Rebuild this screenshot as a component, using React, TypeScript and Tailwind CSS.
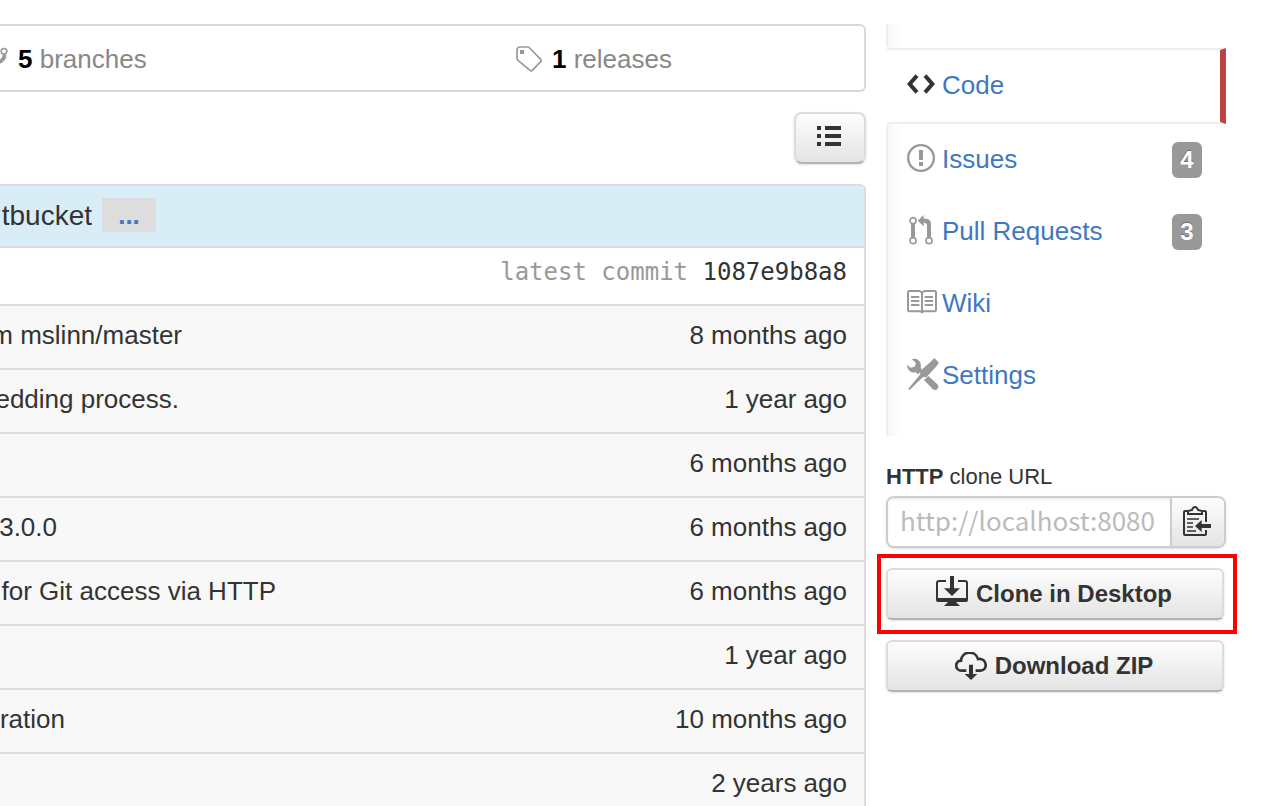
import React from "react";

const GRADIENT = "bg-gradient-to-b from-[#fdfdfd] to-[#e4e4e4]";

function BranchIcon() {
  return (
    <svg aria-hidden="true" className="h-[26px] w-2 shrink-0 overflow-visible" viewBox="0 0 24 78" fill="none" stroke="#999">
      <circle cx="12" cy="16" r="8.5" strokeWidth="5" />
      <path d="M14 27c-1 10-5 17-19 22" strokeWidth="11" />
    </svg>
  );
}

function TagIcon() {
  return (
    <svg aria-hidden="true" className="h-[26px] w-[26px] shrink-0" viewBox="0 0 78 78" fill="none" stroke="#999" strokeWidth="5" strokeLinejoin="round">
      <path d="M3 12Q3 3 12 3h22q4 0 7 3l33 34q4 4 0 7L49 73q-3 4-7 0L6 43q-3-3-3-7z" />
      <rect x="12" y="12" width="12" height="12" fill="#999" stroke="none" />
    </svg>
  );
}

function ListIcon() {
  return (
    <svg aria-hidden="true" className="h-5 w-6" viewBox="0 0 24 20" fill="#333">
      <path d="M0 0h4v4H0zM8 0h16v4H8zM0 8h4v4H0zM8 8h16v4H8zM0 16h4v4H0zM8 16h16v4H8z" />
    </svg>
  );
}

function CodeIcon() {
  return (
    <svg aria-hidden="true" className="h-5 w-7" viewBox="0 0 84 60" fill="none" stroke="#333" strokeWidth="12">
      <path d="M30 5L8 30l22 25M54 5l22 25-22 25" />
    </svg>
  );
}

function IssueIcon() {
  return (
    <svg aria-hidden="true" className="h-7 w-7" viewBox="0 0 84 84" fill="#999">
      <circle cx="42" cy="42" r="38.5" fill="none" stroke="#999" strokeWidth="7" />
      <path d="M36 18h12v30H36zM36 54h12v12H36z" />
    </svg>
  );
}

function PullRequestIcon() {
  return (
    <svg aria-hidden="true" className="ml-0.5 h-[30px] w-6" viewBox="0 0 72 90" fill="#999">
      <g fill="none" stroke="#999" strokeWidth="5">
        <circle cx="12" cy="17" r="9" />
        <circle cx="12" cy="77" r="9" />
        <circle cx="60" cy="77" r="9" />
      </g>
      <path d="M6 27h12v40H6zM26 17L44 0v11h6q16 0 16 17v39H54V31q0-8-10-8v11z" />
    </svg>
  );
}

function WikiIcon() {
  return (
    <svg aria-hidden="true" className="h-6 w-[30px]" viewBox="0 0 90 72" fill="none" stroke="#999" strokeWidth="6">
      <path d="M45 9q-3-6-9-6H7Q3 3 3 7v53q0 4 4 4h32q6 0 6 6q0-6 6-6h32q4 0 4-4V7q0-4-4-4H54q-6 0-9 6v60" />
      <path d="M12 21h25M12 33h25M12 45h25M53 21h25M53 33h25M53 45h25" />
    </svg>
  );
}

function ToolsIcon() {
  return (
    <svg aria-hidden="true" className="h-8 w-8" viewBox="0 0 96 96" fill="#999">
      <path d="M82 0l14 14-9 12-29 32-10-1L8 96l-4-4 36-43-1-9 32-29z" />
      <path d="M15 4C31-2 45 12 41 28l4 8-11 13-9-6C12 46 1 36 0 20l11 9 12-3 4-11z" />
      <path d="M64 54l27 25q6 8 0 14t-14 0L51 66z" />
    </svg>
  );
}

function ClipboardIcon() {
  return (
    <svg aria-hidden="true" className="h-[30px] w-7" viewBox="0 0 84 90" fill="none" stroke="#333" strokeWidth="6">
      <path d="M12 15H6q-3 0-3 3v66q0 3 3 3h60q3 0 3-3V72M60 15h6q3 0 3 3v30" />
      <path d="M15 24v-9l12-3q3-9 9-9t9 9l12 3v9z" />
      <path d="M12 39h36M12 51h18M12 63h18M12 75h27" strokeWidth="5" />
      <path d="M36 60l20-18v12h28v12H56v12z" fill="#333" stroke="none" />
    </svg>
  );
}

function DesktopIcon() {
  return (
    <svg aria-hidden="true" className="mb-1.5 h-[30px] w-8" viewBox="0 0 96 90" fill="#333">
      <path d="M30 15H9q-6 0-6 6v48h90V21q0-6-6-6H66" fill="none" stroke="#333" strokeWidth="6" />
      <path d="M0 66h96v6q0 6-6 6H6q-6 0-6-6zM36 78h24l12 12H24zM42 0h12v37h18L48 60 24 37h18z" />
    </svg>
  );
}

function CloudIcon() {
  return (
    <svg aria-hidden="true" className="h-7 w-8" viewBox="0 0 96 84" fill="#333">
      <path d="M34 56H20C-1 56-2 27 18 26 20-4 62-6 69 21 98 18 99 56 76 56H62" fill="none" stroke="#333" strokeWidth="8" />
      <path d="M42 38h12v28h13L48 84 29 66h13z" />
    </svg>
  );
}

type NavItemProps = { label: string; icon: React.ReactNode; count?: number };

function NavLink({ label, icon, count }: NavItemProps) {
  return (
    <a href="#" className="flex h-[72px] items-center pl-[21px] pr-6 text-[#4078c0]">
      <span className="flex w-[35px] shrink-0 items-center pb-1">{icon}</span>
      <span className="flex-1 pb-0.5">{label}</span>
      {count !== undefined && (
        <span className="flex h-9 w-[30px] items-center justify-center rounded-md bg-[#999] text-2xl font-bold text-white [text-shadow:0_-1px_1px_rgba(0,0,0,0.3)]">
          {count}
        </span>
      )}
    </a>
  );
}

const ROWS = [
  { message: "m mslinn/master", width: "w-[182px]", age: "8 months ago" },
  { message: "edding process.", width: "w-[179px]", age: "1 year ago" },
  { message: "", width: "w-0", age: "6 months ago" },
  { message: "3.0.0", width: "w-[57px]", age: "6 months ago" },
  { message: "for Git access via HTTP", width: "w-[276px]", age: "6 months ago" },
  { message: "", width: "w-0", age: "1 year ago" },
  { message: "ration", width: "w-[65px]", age: "10 months ago" },
  { message: "", width: "w-0", age: "2 years ago" },
];

function ActionButton({ icon, label }: { icon: React.ReactNode; label: string }) {
  return (
    <button
      type="button"
      className={`${GRADIENT} flex h-[52px] w-full items-center justify-center gap-2 rounded-md border-2 border-[#dcdcdc] border-b-[#b3b3b3] pr-0.5 text-2xl font-bold shadow-sm`}
    >
      {icon}
      {label}
    </button>
  );
}

export default function App() {
  return (
    <div className="flex h-screen items-start gap-5 overflow-hidden bg-white pr-[54px] pt-6 font-['Liberation_Sans',Arial,sans-serif] text-[26px] leading-8 text-[#333]">
      <main className="min-w-0 flex-1">
        <div className="flex h-[68px] items-center rounded-r-md border-y-2 border-r-2 border-[#d8d8d8] pt-0.5 text-[#888]">
          <a href="#" className="flex w-[516px] items-center gap-2.5">
            <BranchIcon />
            <span><b className="text-black">5</b> branches</span>
          </a>
          <a href="#" className="flex items-center gap-2.5">
            <TagIcon />
            <span><b className="text-black">1</b> releases</span>
          </a>
        </div>

        <div className="flex justify-end py-5">
          <button
            type="button"
            aria-label="List view"
            className={`${GRADIENT} flex h-[52px] w-[72px] items-center justify-center rounded-lg border-2 border-[#dcdcdc] border-b-[#b3b3b3] pb-1 pr-0.5 shadow-sm`}
          >
            <ListIcon />
          </button>
        </div>

        <div className="overflow-hidden rounded-tr-md border-r-2 border-t-2 border-[#ddd]">
          <table className="w-full border-collapse">
            <thead>
              <tr className="h-[61px] border-b-2 border-[#ddd] bg-[#d9edf7]">
                <th colSpan={2} className="p-0 text-left font-normal">
                  <div className="flex items-center gap-2.5">
                    <span className="flex w-[92px] justify-end overflow-hidden whitespace-nowrap text-[28px]">tbucket</span>
                    <button type="button" className="mb-0.5 h-[34px] w-[54px] bg-[#ddd] font-bold leading-8 text-[#4078c0]">...</button>
                  </div>
                </th>
              </tr>
            </thead>
            <tbody>
              <tr className="h-[58px] border-b-2 border-[#ddd]">
                <td colSpan={2} className="p-0 pb-2 pr-[17px] text-right font-['DejaVu_Sans_Mono',monospace] text-2xl text-[#333]">
                  <span className="text-[#999]">latest commit</span> <a href="#">1087e9b8a8</a>
                </td>
              </tr>
              {ROWS.map((row, i) => (
                <tr key={i} className="h-16 border-b-2 border-[#ddd] bg-[#f8f8f8]">
                  <td className="p-0 pb-1">
                    <div className={`${row.width} flex justify-end overflow-hidden whitespace-nowrap`}>{row.message}</div>
                  </td>
                  <td className="whitespace-nowrap p-0 pb-1 pr-[17px] text-right">{row.age}</td>
                </tr>
              ))}
            </tbody>
          </table>
        </div>
      </main>

      <aside className="w-[340px] shrink-0">
        <nav aria-label="Repository">
          <div className="h-6 rounded-bl border-l-2 border-[#eee] bg-gradient-to-r from-[#f7f7f7] to-white to-[14px]" />
          <div className="rounded-l border-y-2 border-r-[6px] border-y-[#eee] border-r-[#bb4444]">
            <NavLink label="Code" icon={<CodeIcon />} />
          </div>
          <div className="rounded-tl border-l-2 border-[#eee] bg-gradient-to-r from-[#f7f7f7] to-white to-[14px] pb-6">
            <div className="-ml-0.5">
              <NavLink label="Issues" icon={<IssueIcon />} count={4} />
              <NavLink label="Pull Requests" icon={<PullRequestIcon />} count={3} />
              <NavLink label="Wiki" icon={<WikiIcon />} />
              <NavLink label="Settings" icon={<ToolsIcon />} />
            </div>
          </div>
        </nav>

        <label htmlFor="clone-url" className="block pb-[3px] pt-[25px] text-[22px]">
          <b>HTTP</b> clone URL
        </label>
        <div className="flex h-[52px] overflow-hidden rounded-lg border-2 border-[#ccc] shadow-sm">
          <input
            id="clone-url"
            readOnly
            defaultValue="http://localhost:8080"
            className="min-w-0 flex-1 bg-white pb-1 pl-3 font-['Noto_Sans_CJK_JP',sans-serif] text-[26px] text-[#bbb] shadow-[inset_0_2px_2px_rgba(0,0,0,0.07)] outline-none"
          />
          <button type="button" aria-label="Copy URL" className={`${GRADIENT} flex w-[54px] items-center justify-center border-l-2 border-[#ccc] pb-0.5 pr-0.5`}>
            <ClipboardIcon />
          </button>
        </div>

        <div className="flex flex-col gap-5 pr-0.5 pt-5">
          <div className="relative">
            <ActionButton icon={<DesktopIcon />} label="Clone in Desktop" />
            <div className="pointer-events-none absolute -bottom-3.5 -left-[9px] -right-[13px] -top-3.5 border-4 border-[#f00]" />
          </div>
          <ActionButton icon={<CloudIcon />} label="Download ZIP" />
        </div>
      </aside>
    </div>
  );
}
